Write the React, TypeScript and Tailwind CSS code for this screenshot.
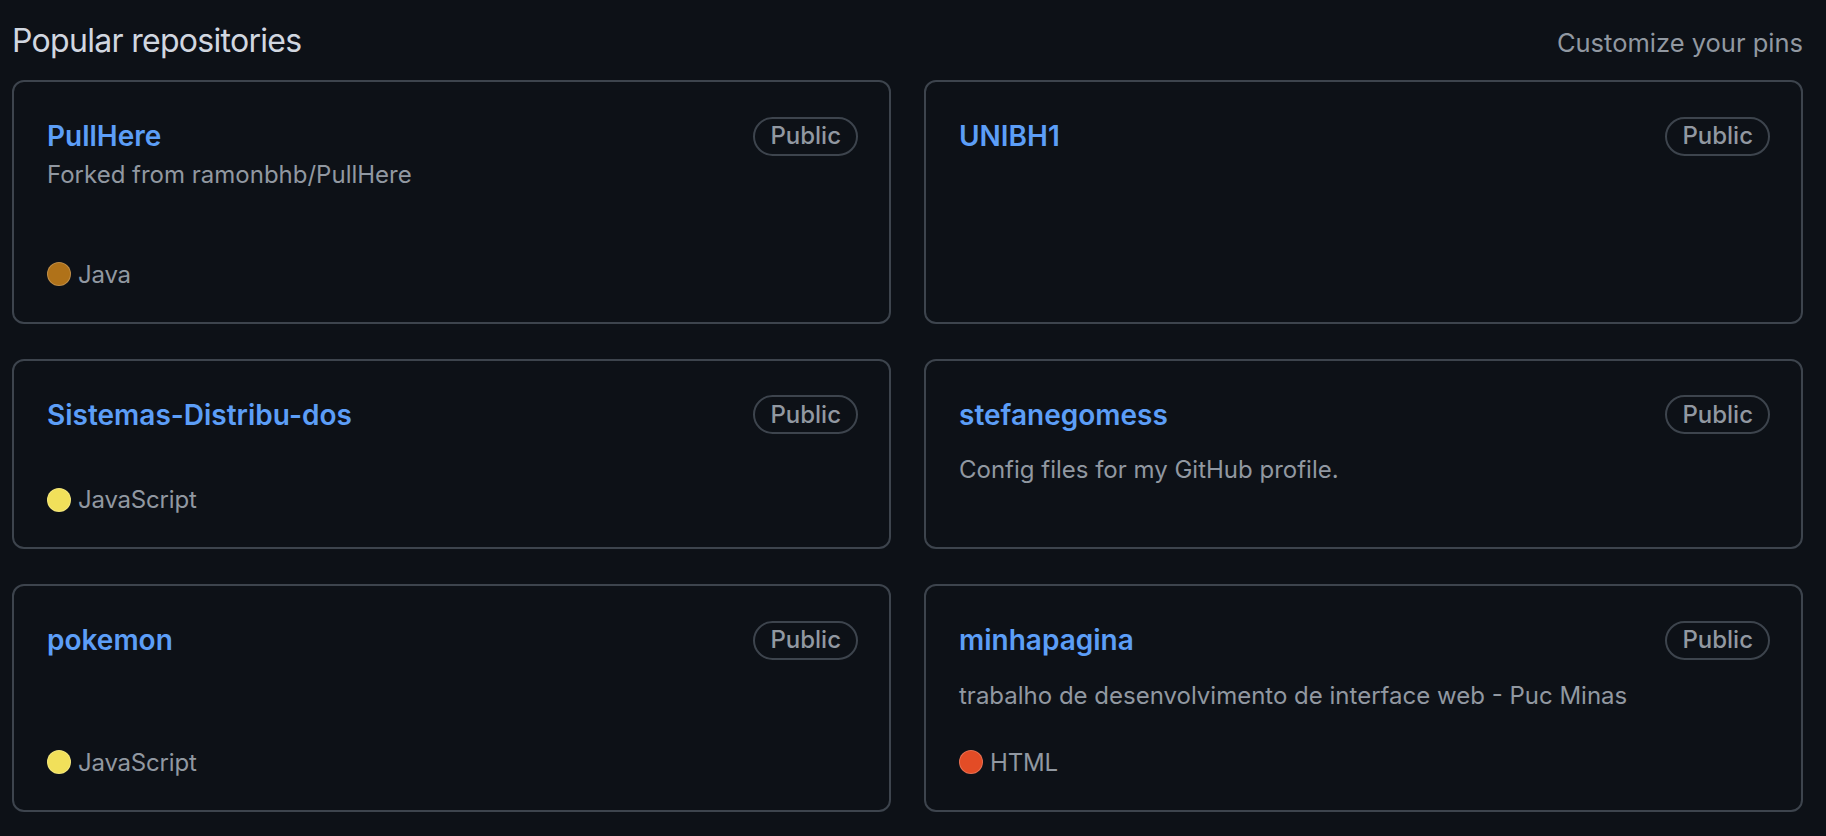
import React from "react";

type Repo = {
  name: string;
  fork?: string;
  desc?: string;
  lang?: { name: string; color: string };
};

const repos: Repo[] = [
  {
    name: "PullHere",
    fork: "Forked from ramonbhb/PullHere",
    lang: { name: "Java", color: "#b07219" },
  },
  { name: "UNIBH1" },
  {
    name: "Sistemas-Distribu-dos",
    lang: { name: "JavaScript", color: "#f1e05a" },
  },
  { name: "stefanegomess", desc: "Config files for my GitHub profile." },
  { name: "pokemon", lang: { name: "JavaScript", color: "#f1e05a" } },
  {
    name: "minhapagina",
    desc: "trabalho de desenvolvimento de interface web - Puc Minas",
    lang: { name: "HTML", color: "#e34c26" },
  },
];

function Card({ repo }: { repo: Repo }) {
  return (
    <div className="flex flex-col rounded-[12px] border-2 border-[#3d444d] pb-[32px] pl-[33px] pr-[31px] pt-[34px]">
      <div className="flex h-[40px] items-center justify-between">
        <a className="text-[28px] font-semibold leading-[40px] text-[#5c9ef7]">
          {repo.name}
        </a>
        <span className="flex h-[39px] items-center rounded-full border-2 border-[#3d444d] px-[15px] text-[24px] font-medium text-[#9198a1]">
          Public
        </span>
      </div>
      {repo.fork && (
        <p className="mb-[16px] text-[24px] leading-[37px] text-[#9198a1]">
          {repo.fork}
        </p>
      )}
      <p className="mt-[16.5px] grow text-[24px] leading-[37px] text-[#9198a1]">
        {repo.desc}
      </p>
      {repo.lang && (
        <p className="mt-[33px] flex h-[31px] items-center gap-[7px] text-[24px] leading-[31px] tracking-[-0.2px] text-[#9198a1]">
          <span
            className="inline-block h-[24px] w-[24px] rounded-full border border-white/20"
            style={{ backgroundColor: repo.lang.color }}
          />
          <span>{repo.lang.name}</span>
        </p>
      )}
    </div>
  );
}

export default function App() {
  return (
    <div
      className="min-h-[836px] w-full bg-[#0d1117] pl-[12px] pr-[23px] pt-[17px]"
      style={{ fontFamily: "Inter, 'Noto Sans', sans-serif" }}
    >
      <div className="mb-[15px] flex h-[48px] items-baseline justify-between">
        <h2 className="text-[32px] font-normal leading-[48px] tracking-[-0.7px] text-[#d1d7e0]">
          Popular repositories
        </h2>
        <a className="text-[25.5px] leading-[48px] text-[#9198a1]">
          Customize your pins
        </a>
      </div>
      <div className="grid grid-cols-2 gap-x-[33px] gap-y-[35px]">
        {repos.map((r) => (
          <Card key={r.name} repo={r} />
        ))}
      </div>
    </div>
  );
}
